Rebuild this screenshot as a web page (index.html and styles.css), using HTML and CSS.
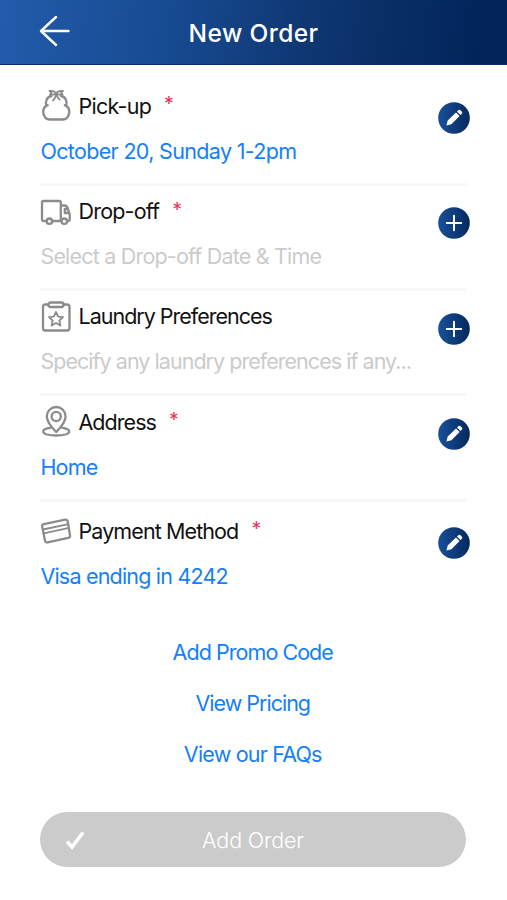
FILE: index.html
```html
<!DOCTYPE html>
<html lang="en">
<head>
<meta charset="utf-8">
<title>New Order</title>
<link rel="stylesheet" href="styles.css">
</head>
<body>
<svg class="defs" aria-hidden="true">
  <linearGradient id="navy" x1="0" y1="0" x2="1" y2="0"><stop offset="0" stop-color="#19509a"/><stop offset="1" stop-color="#04285d"/></linearGradient>
  <symbol id="edit" viewBox="0 0 32 32">
    <circle cx="16" cy="16" r="15.8" fill="url(#navy)"/>
    <path d="M8.4 23.6l1.3-5 8.3-8.1 3.6 3.6-8.2 8.2zM19 9.5l1.6-1.5q.8-.7 1.6 0l1.8 1.8q.7.8 0 1.6l-1.5 1.6z" fill="#fff"/>
  </symbol>
  <symbol id="plus" viewBox="0 0 32 32">
    <circle cx="16" cy="16" r="15.8" fill="url(#navy)"/>
    <path d="M16 8.8v14.4M8.8 16h14.4" stroke="#fff" stroke-width="2" stroke-linecap="round"/>
  </symbol>
</svg>
<header class="topbar">
  <svg class="back" viewBox="0 0 32 32"><path d="M17 2L2 16l15 14M2 16h27.5" /></svg>
  <h1 class="heading">New Order</h1>
</header>
<main class="content">
  <section class="row">
    <div class="text">
      <h2 class="title">
        <svg class="icon" viewBox="0 0 30 32"><path d="M10.500 6C5.500 7 4 12 5.500 15.800C1.500 18 1.500 23 3.500 26.500Q5 29.500 9 29.500H21.500Q25.500 29.500 27 26.500C29 23 29 18 25 15.800C26.500 12 25 7 20 6M5.500 15.800l1.200-.6M25 15.800l-1.200-.6"/><path d="M8.500 1L10.500 2.500 9 4.500Q12.500 5 15.200 3.500Q18 5 21.500 4.500L20 2.500 22 1Q18 .2 15.200 3Q12.500 .2 8.500 1zM15 4Q14.800 8 12 10.500M15.500 4Q16.500 8 18.500 9.500" class="thin"/></svg>
        <span class="l1">Pick-up</span><span class="star">*</span>
      </h2>
      <p class="value v1">October 20, Sunday 1-2pm</p>
    </div>
    <svg class="action"><use href="#edit"/></svg>
  </section>
  <section class="row">
    <div class="text">
      <h2 class="title">
        <svg class="icon" viewBox="0 0 30 32"><path d="M5 25H2.500Q1 25 1 23.500V6.500Q1 5 2.500 5h15.800q1.500 0 1.500 1.500V25h-8M19.800 9.500H23.500q2.500.3 3.300 2.800L28.700 18.500V23.500q0 1.500-2 1.500M23.800 13v4h4.500M23.800 13h2.800"/><circle cx="8.400" cy="25.200" r="2.700"/><circle cx="23.300" cy="25.200" r="2.700"/></svg>
        <span class="l2">Drop-off</span><span class="star">*</span>
      </h2>
      <p class="value hint v2">Select a Drop-off Date &amp; Time</p>
    </div>
    <svg class="action"><use href="#plus"/></svg>
  </section>
  <section class="row">
    <div class="text">
      <h2 class="title">
        <svg class="icon" viewBox="0 0 30 32"><path d="M7.500 3.500H4Q2 3.500 2 6v21Q2 29.500 4 29.500h22q2.500 0 2.500-2.500V6Q28.500 3.500 26 3.500h-3.500"/><rect x="7.500" y="1.500" width="15" height="4.500" rx="2"/><path d="M15 11l2.200 4.600 4.800.6-3.600 3.300 1 5-4.400-2.500-4.400 2.500 1-5L8 16.200l4.800-.6z" class="thin"/></svg>
        <span class="l3">Laundry Preferences</span>
      </h2>
      <p class="value hint v3">Specify any laundry preferences if any...</p>
    </div>
    <svg class="action"><use href="#plus"/></svg>
  </section>
  <section class="row">
    <div class="text">
      <h2 class="title">
        <svg class="icon" viewBox="0 0 30 32"><path d="M15.200 26Q5.800 16.500 5.800 10.200a9.400 9.200 0 0 1 18.800 0Q24.600 16.500 15.200 26z"/><circle cx="15.200" cy="10.500" r="4.600"/><path d="M9 21.800C.5 22.800 .5 27 6 28.500q9.200 2 18.400 0c5.500-1.500 5.500-5.700-3-6.700"/></svg>
        <span class="l4">Address</span><span class="star">*</span>
      </h2>
      <p class="value v4">Home</p>
    </div>
    <svg class="action"><use href="#edit"/></svg>
  </section>
  <section class="row last">
    <div class="text">
      <h2 class="title">
        <svg class="icon" viewBox="0 0 30 32"><path d="M2.800 9.200L24.200 4.700q2-.4 2.500 1.600L29 20.500q.3 2-1.700 2.400L6.500 27.300q-2 .4-2.500-1.600L1.200 11.500q-.3-1.900 1.600-2.300z"/><path class="thin" d="M2 14.500L27.400 9.100M2.700 18.300l25.400-5.400"/></svg>
        <span class="l5">Payment Method</span><span class="star">*</span>
      </h2>
      <p class="value v5">Visa ending in 4242</p>
    </div>
    <svg class="action"><use href="#edit"/></svg>
  </section>
  <nav class="links">
    <a class="k1">Add Promo Code</a>
    <a class="k2">View Pricing</a>
    <a class="k3">View our FAQs</a>
  </nav>
  <button class="submit">
    <svg class="check" viewBox="0 0 22 20"><path d="M3 11.500l5 5.500L19 2.500"/></svg>
    <span>Add Order</span>
  </button>
</main>
</body>
</html>
```
FILE: styles.css
```css
* { box-sizing: border-box; margin: 0; padding: 0; }
body { width: 507px; height: 900px; background: #fff; font-family: Inter, "Liberation Sans", sans-serif; overflow: hidden; }
.defs { position: absolute; width: 0; height: 0; }
.topbar { height: 65px; display: grid; grid-template-columns: 86px 1fr 86px; align-items: center; background: linear-gradient(97deg, #225cab 0%, #174990 35%, #0e3670 62%, #01235a 96%); border-bottom: 1px solid #0a2d68; }
.back { width: 32px; height: 32px; margin: -3px 0 0 39px; fill: none; stroke: #fff; stroke-width: 2.4; stroke-linecap: round; stroke-linejoin: round; }
.heading { color: #fff; font-size: 24.500px; font-weight: 500; letter-spacing: .4px; text-align: center; line-height: 30px; padding-top: 1px; }
.content { padding: 15.400px 40px 0; }
.row { height: 105.300px; display: flex; justify-content: space-between; border-bottom: 3px solid #f7f7f7; }
.title { display: flex; align-items: center; height: 32px; margin-top: 9.500px; font-size: 21.500px; font-weight: 400; color: #111; white-space: nowrap; }
.icon { width: 30px; height: 32px; margin: 1px 7.700px 0 .8px; fill: none; stroke: #8b8b8b; stroke-width: 2.300; stroke-linecap: round; stroke-linejoin: round; overflow: visible; }
.thin { stroke-width: 1.800; }
.star { color: #ef3158; margin: -3px 0 0 13px; font-size: 19.500px; }
.value { margin-top: 15px; height: 28px; line-height: 28px; font-size: 21.500px; color: #147efb; white-space: nowrap; padding-left: .4px; }
.l1 { letter-spacing: -.75px; }
.l2 { letter-spacing: -.8px; }
.l3 { letter-spacing: -1px; }
.l4 { letter-spacing: -.95px; }
.l5 { letter-spacing: -.9px; }
.v1 { letter-spacing: -.66px; }
.v2 { letter-spacing: -.8px; }
.v3 { letter-spacing: -.96px; }
.v4, .v5 { letter-spacing: -.8px; }
.hint { color: #cbcbcb; }
.action { width: 32px; height: 32px; margin: 21.600px -2.800px 0 0; flex: none; }
.last { height: 106px; padding-top: 3.500px; border: 0; }
.links { display: flex; flex-direction: column; align-items: center; gap: 22.700px; margin: 30.800px 1.500px 0 0; color: #147efb; font-size: 21.500px; line-height: 28px; }
.k1 { letter-spacing: -.95px; }
.k2 { letter-spacing: -1px; }
.k3 { letter-spacing: -.8px; }
.submit { width: 426px; height: 55px; margin-top: 44px; border: 0; border-radius: 28px; background: #cbcbcb; color: #fff; font: 300 21.500px Inter, sans-serif; letter-spacing: -.15px; display: grid; grid-template-columns: 70px 1fr 70px; align-items: center; padding-top: 1px; }
.check { width: 22px; height: 20px; margin-left: 24px; fill: none; stroke: #fff; stroke-width: 3.600; }
```
